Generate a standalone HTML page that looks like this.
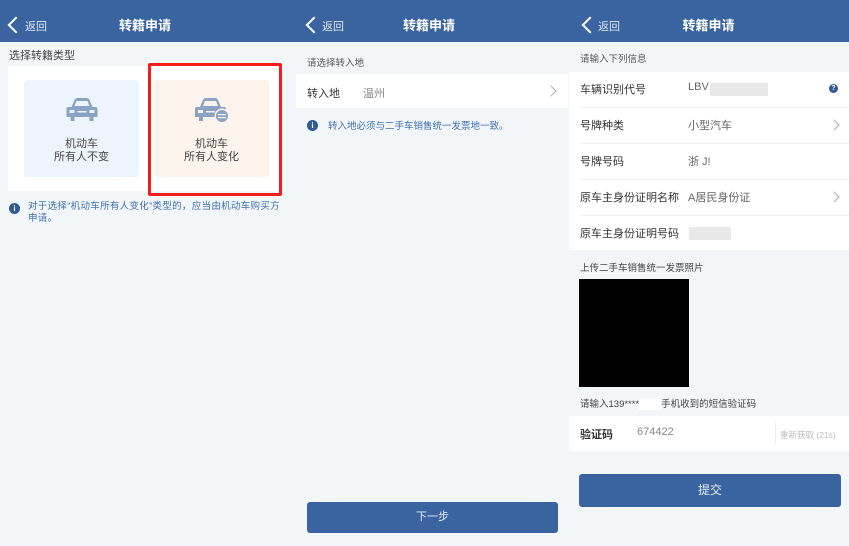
<!DOCTYPE html>
<html><head><meta charset="utf-8"><style>
*{margin:0;padding:0;box-sizing:border-box}
body{width:849px;height:546px;overflow:hidden;background:#f3f6f8;font-family:"Liberation Sans","Noto Sans CJK SC",sans-serif;position:relative;color:#333}
.a{position:absolute;white-space:nowrap}
.hdr{position:absolute;top:0;height:42px;background:#3a64a0;color:#fff}
.hdr .t{position:absolute;top:15px;font-size:13px;font-weight:bold;width:100%;text-align:center}
.hdr .b{position:absolute;top:18px;font-size:11px;color:#dfe7f2}
.chev{position:absolute;width:12px;height:12px;border-left:2.5px solid #fff;border-bottom:2.5px solid #fff;transform:rotate(45deg)}
.w{position:absolute;background:#fff}
.gc{position:absolute;width:8px;height:8px;border-right:1.3px solid #aaa;border-top:1.3px solid #aaa;transform:rotate(45deg)}
.line{position:absolute;height:1px;background:#eceff2}
.lbl{font-size:11px;color:#333}
.val{font-size:11px;color:#666}
.blur{position:absolute;background:#e8e8e8}
.info{position:absolute;width:11px;height:11px;border-radius:50%;background:#2f5a96;color:#fff;font-size:8px;text-align:center;line-height:11px;font-weight:bold}
</style></head><body>
<div class="hdr" style="left:0;width:290px"><div class="chev" style="left:10px;top:19px"></div><span class="b" style="left:25px">返回</span><div class="t">转籍申请</div></div>
<div class="hdr" style="left:290px;width:278px"><div class="chev" style="left:18px;top:19px"></div><span class="b" style="left:32px">返回</span><div class="t">转籍申请</div></div>
<div class="hdr" style="left:568px;width:281px"><div class="chev" style="left:16px;top:19px"></div><span class="b" style="left:30px">返回</span><div class="t">转籍申请</div></div>

<div class="a" style="left:9px;top:47px;font-size:11px;color:#444">选择转籍类型</div>
<div class="w" style="left:8px;top:66px;width:274px;height:125px"></div>
<div class="a" style="left:24px;top:80px;width:115px;height:97px;background:#eef4fc;border-radius:3px"></div>
<div class="a" style="left:154px;top:80px;width:115px;height:97px;background:#fbf3ec;border-radius:3px"></div>
<svg class="a" style="left:65px;top:97px" width="34" height="25" viewBox="0 0 33 25"><path d="M6 10 L9 3 Q10 1 12 1 L21 1 Q23 1 24 3 L27 10 L30 10 Q32 10 32 12 L32 20 L28 20 L28 24 L24 24 L24 20 L9 20 L9 24 L5 24 L5 20 L1 20 L1 12 Q1 10 3 10 Z" fill="#8aa3c3"/><path d="M9 9 L11 4 L22 4 L24 9 Z" fill="#eef4fc"/><rect x="4" y="13" width="5" height="3" fill="#eef4fc"/><rect x="24" y="13" width="5" height="3" fill="#eef4fc"/><rect x="12" y="14" width="9" height="1.5" fill="#eef4fc"/></svg>
<svg class="a" style="left:194px;top:97px" width="36" height="27" viewBox="0 0 36 27"><path d="M6 10 L9 3 Q10 1 12 1 L21 1 Q23 1 24 3 L27 10 L30 10 Q32 10 32 12 L32 20 L28 20 L28 24 L24 24 L24 20 L9 20 L9 24 L5 24 L5 20 L1 20 L1 12 Q1 10 3 10 Z" fill="#8aa3c3"/><path d="M9 9 L11 4 L22 4 L24 9 Z" fill="#fbf3ec"/><rect x="4" y="13" width="5" height="3" fill="#fbf3ec"/><rect x="12" y="14" width="9" height="1.5" fill="#fbf3ec"/><circle cx="28" cy="19" r="7.5" fill="#fbf3ec"/><circle cx="28" cy="19" r="6" fill="#8aa3c3"/><rect x="24" y="17" width="8" height="1.2" fill="#fbf3ec"/><rect x="24" y="20" width="8" height="1.2" fill="#fbf3ec"/></svg>
<div class="a" style="left:24px;top:138px;width:115px;text-align:center;font-size:11px;line-height:13px;color:#444">机动车<br>所有人不变</div>
<div class="a" style="left:154px;top:138px;width:115px;text-align:center;font-size:11px;line-height:13px;color:#444">机动车<br>所有人变化</div>
<div class="a" style="left:148px;top:63px;width:134px;height:133px;border:3px solid #f51c1c;border-radius:2px"></div>
<div class="info" style="left:9px;top:203px">i</div>
<div class="a" style="left:28px;top:201px;font-size:9.5px;line-height:12px;color:#3f6fae;white-space:normal;width:256px;letter-spacing:0.3px">对于选择“机动车所有人变化”类型的，应当由机动车购买方申请。</div>

<div class="a" style="left:307px;top:55px;font-size:9.5px;color:#555">请选择转入地</div>
<div class="w" style="left:296px;top:74px;width:272px;height:34px"></div>
<div class="a lbl" style="left:307px;top:85px">转入地</div>
<div class="a val" style="left:363px;top:85px;color:#888">温州</div>
<div class="gc" style="left:547px;top:87px"></div>
<div class="info" style="left:307px;top:120px">i</div>
<div class="a" style="left:328px;top:118px;font-size:9.5px;color:#3f6fae">转入地必须与二手车销售统一发票地一致。</div>
<div class="a" style="left:307px;top:502px;width:251px;height:31px;background:#3a64a0;border-radius:3px;color:#e6ecf5;font-size:11px;text-align:center;line-height:31px">下一步</div>

<div class="a" style="left:580px;top:51px;font-size:9.5px;color:#555">请输入下列信息</div>
<div class="w" style="left:569px;top:72px;width:280px;height:178px"></div>
<div class="line" style="left:580px;top:107px;width:269px"></div>
<div class="line" style="left:580px;top:143px;width:269px"></div>
<div class="line" style="left:580px;top:179px;width:269px"></div>
<div class="line" style="left:580px;top:215px;width:269px"></div>
<div class="a lbl" style="left:580px;top:81px">车辆识别代号</div>
<div class="a val" style="left:688px;top:81px">LBV</div>
<div class="blur" style="left:710px;top:83px;width:58px;height:13px"></div>
<div class="info" style="left:829px;top:84px;width:9px;height:9px;line-height:9px;font-size:7px">?</div>
<div class="a lbl" style="left:580px;top:117px">号牌种类</div>
<div class="a val" style="left:688px;top:117px">小型汽车</div>
<div class="gc" style="left:830px;top:121px"></div>
<div class="a lbl" style="left:580px;top:153px">号牌号码</div>
<div class="a val" style="left:688px;top:153px">浙 J!</div>
<div class="a lbl" style="left:580px;top:189px">原车主身份证明名称</div>
<div class="a val" style="left:688px;top:189px">A居民身份证</div>
<div class="gc" style="left:830px;top:193px"></div>
<div class="a lbl" style="left:580px;top:225px">原车主身份证明号码</div>
<div class="blur" style="left:689px;top:227px;width:42px;height:13px"></div>
<div class="a" style="left:580px;top:260px;font-size:9.5px;color:#444">上传二手车销售统一发票照片</div>
<div class="a" style="left:579px;top:279px;width:110px;height:108px;background:#000"></div>
<div class="a" style="left:580px;top:396px;font-size:9.5px;color:#444">请输入139****<span style="display:inline-block;width:22px;background:#fff">&nbsp;</span>手机收到的短信验证码</div>
<div class="w" style="left:569px;top:416px;width:280px;height:35px"></div>
<div class="a" style="left:580px;top:426px;font-size:11px;font-weight:bold;color:#333">验证码</div>
<div class="a val" style="left:637px;top:426px;color:#888">674422</div>
<div class="a" style="left:775px;top:422px;width:1px;height:22px;background:#eee"></div>
<div class="a" style="left:780px;top:429px;font-size:8.5px;color:#bbb">重新获取 (21s)</div>
<div class="a" style="left:579px;top:474px;width:262px;height:33px;background:#3a64a0;border-radius:3px;color:#e6ecf5;font-size:12px;text-align:center;line-height:33px">提交</div>
</body></html>
